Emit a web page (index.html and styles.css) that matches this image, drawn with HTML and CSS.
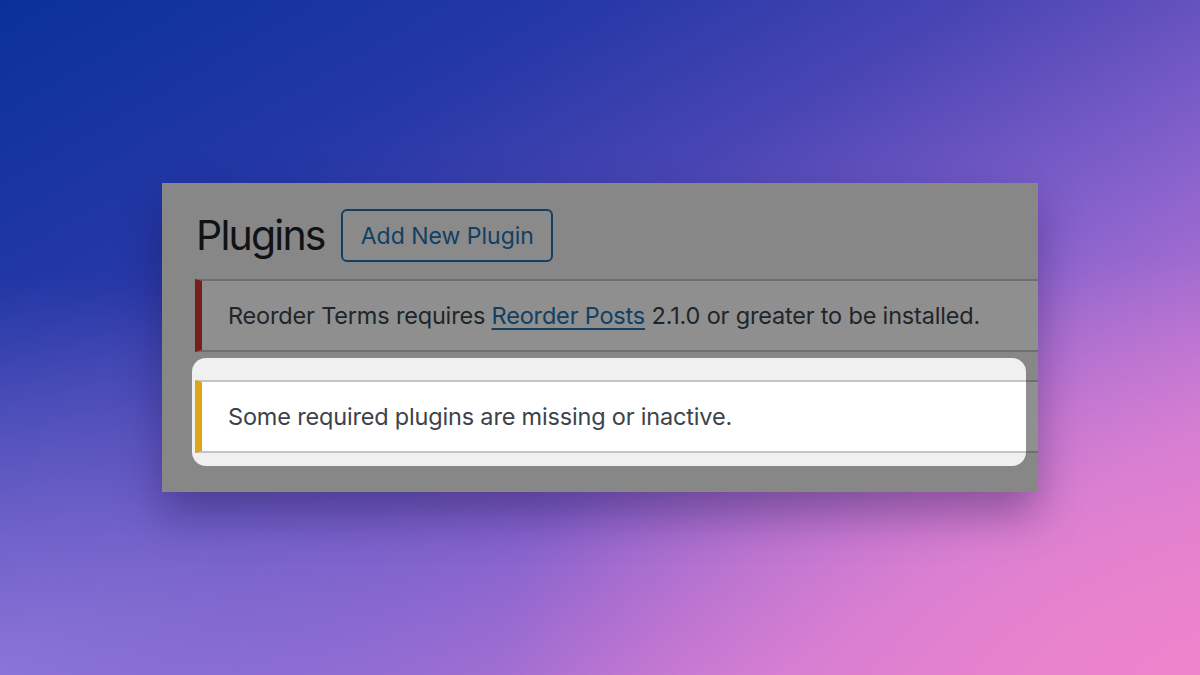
FILE: index.html
```html
<!DOCTYPE html>
<html lang="en">
<head>
<meta charset="utf-8">
<title>Plugins</title>
<link rel="stylesheet" href="styles.css">
</head>
<body>
<div class="stage">
  <div class="panel">
    <div class="header">
      <h1 class="title">Plugins</h1>
      <a class="add-btn" href="#">Add New Plugin</a>
    </div>
    <div class="notice notice-error">
      <p>Reorder Terms requires <a href="#" class="link">Reorder Posts</a> 2.1.0 or greater to be installed.</p>
    </div>
    <div class="notice notice-warning">
      <p>Some required plugins are missing or inactive.</p>
    </div>
    <div class="spotlight"></div>
  </div>
</div>
</body>
</html>
```
FILE: styles.css
```css
html, body {
  margin: 0;
  padding: 0;
}
body {
  width: 1200px;
  height: 675px;
  overflow: hidden;
  background:
    radial-gradient(ellipse 700px 420px at 1200px 675px, rgba(238,132,204,0.9), rgba(238,132,204,0) 100%),
    radial-gradient(ellipse 600px 400px at 0px 675px, rgba(150,125,222,0.8), rgba(150,125,222,0) 100%),
    linear-gradient(150deg, #0a3198 0%, #2538a6 25%, #4a46b4 42%, #8762cc 62%, #c77ad6 82%, #e883ca 100%);
  font-family: Inter, "Noto Sans", "Liberation Sans", sans-serif;
}
.stage {
  padding: 183px 0 0 162px;
}
.panel {
  position: relative;
  width: 876px;
  height: 309px;
  background: #f0f0f1;
  overflow: hidden;
  box-shadow: 0 22px 40px rgba(20, 10, 60, 0.35);
  padding-top: 26px;
  box-sizing: border-box;
}
.header {
  display: flex;
  align-items: center;
  padding-left: 34px;
  height: 53px;
  gap: 16px;
}
.title {
  margin: 0;
  font-size: 41px;
  font-weight: 400;
  color: #1d2327;
  line-height: 1;
  letter-spacing: -1.8px;
}
.add-btn {
  display: flex;
  align-items: center;
  height: 53px;
  box-sizing: border-box;
  padding: 0 17px 0 18px;
  border: 2px solid #2271b1;
  border-radius: 6px;
  color: #2271b1;
  text-decoration: none;
  font-size: 23px;
  background: #f6f7f7;
}
.notice {
  margin-left: 33px;
  width: 860px;
  box-sizing: border-box;
  height: 73px;
  background: #fff;
  border: 2px solid #c3c4c7;
  border-left-width: 7px;
  display: flex;
  align-items: center;
  padding-left: 26px;
}
.notice p {
  margin: 0;
  font-size: 23.5px;
  letter-spacing: -0.18px;
  color: #3c434a;
  white-space: nowrap;
}
.notice-error {
  margin-top: 17px;
  border-left-color: #d63638;
}
.notice-warning {
  margin-top: 28px;
  border-left-color: #dba617;
}
.link {
  color: #2271b1;
  text-decoration: underline;
  text-underline-offset: 4px;
  text-decoration-thickness: 2px;
}
.spotlight {
  position: absolute;
  left: 30px;
  top: 175px;
  width: 834px;
  height: 108px;
  border-radius: 14px;
  box-shadow: 0 0 0 2000px rgba(0, 0, 0, 0.44);
  pointer-events: none;
}
```
